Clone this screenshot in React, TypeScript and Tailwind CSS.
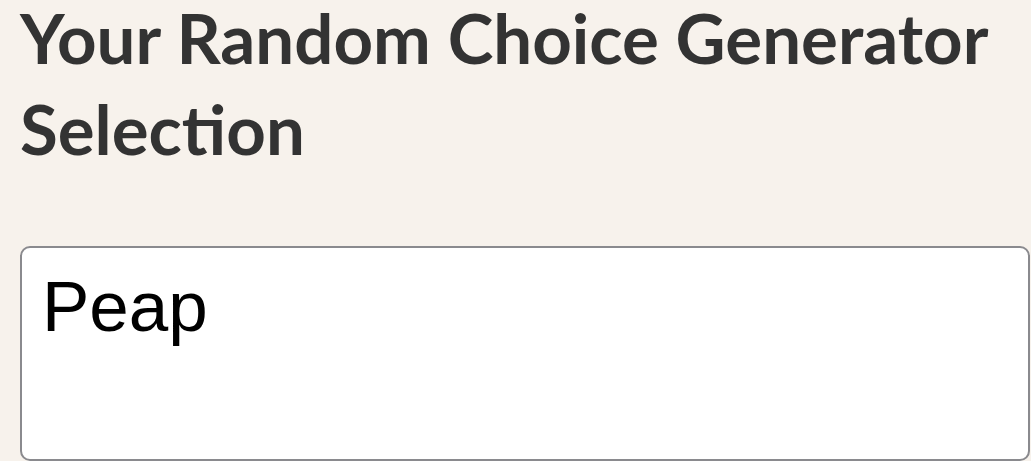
export default function App() {
  return (
    <div className="min-h-[466px] w-full bg-[#f7f2ec] pl-5 pr-[1px]">
      <h1 className="-mt-[8px] font-['Lato',sans-serif] text-[69px] font-bold leading-[91px] text-[#333333]">
        Your Random Choice Generator Selection
      </h1>
      <div className="mt-[72px] h-[215px] w-[1010px] rounded-[10px] border-2 border-[#8a8a8e] bg-white px-5 pt-[18px] font-['Liberation_Sans',Arial,sans-serif] text-[71px] leading-[82px] text-black">
        Peap
      </div>
    </div>
  );
}
